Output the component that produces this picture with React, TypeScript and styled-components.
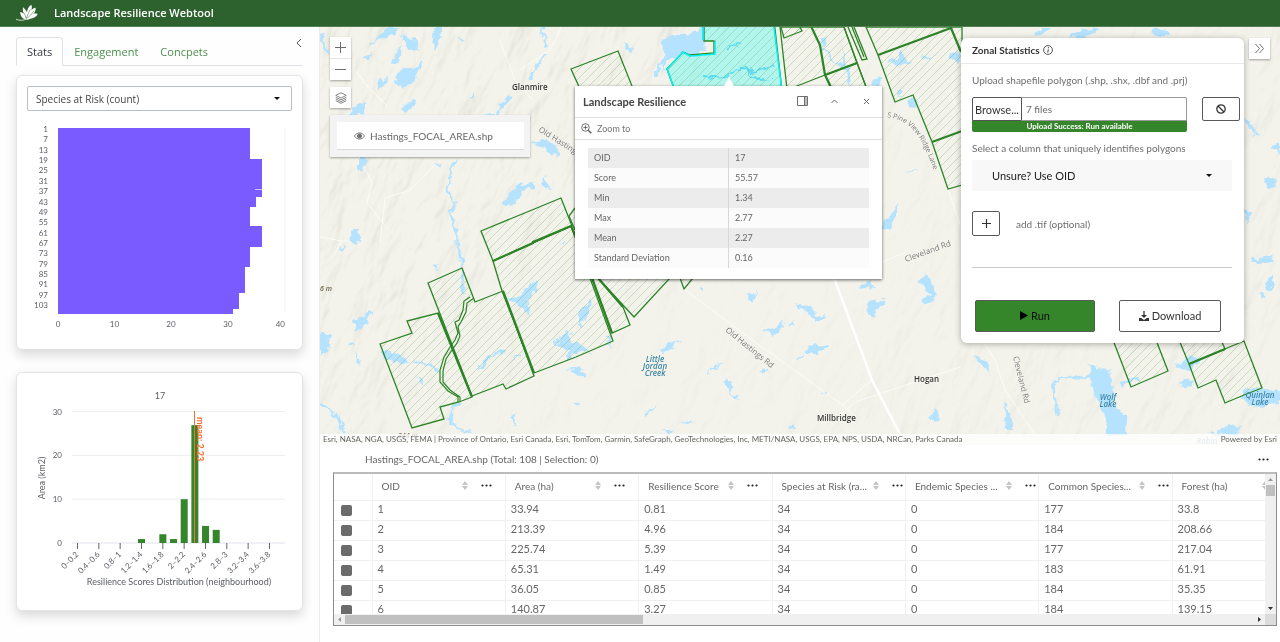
import React from "react";
import styled, { createGlobalStyle } from "styled-components";

const ui = `Lato, "Liberation Sans", sans-serif`;
const sans = `"Open Sans", "Noto Sans", sans-serif`;

const Global = createGlobalStyle`
  *, *::before, *::after { box-sizing: border-box; }
  html, body { margin: 0; padding: 0; }
  body { font-family: ${ui}; font-size: 10px; color: #666; background: #fff; }
  button, input, select { font: inherit; color: inherit; margin: 0; }
  button { cursor: pointer; }
`;

const Page = styled.div`
  min-height: 100vh;
  display: flex;
  flex-direction: column;
`;

const Header = styled.header`
  height: 27px;
  flex: none;
  display: flex;
  align-items: center;
  gap: 14px;
  padding: 0 16px;
  background: #2d622f;
  border-bottom: 1px solid #537f55;
`;

const Title = styled.h1`
  margin: 0;
  font: 600 11px/16px ${sans};
  color: #fff;
`;

const Body = styled.div`
  flex: 1;
  display: grid;
  grid-template-columns: 320px minmax(0, 1fr);
`;

const Sidebar = styled.aside`
  padding: 10px 16px 16px;
  background: #fefefe;
  border-right: 1px solid #ececec;
`;

const TabRow = styled.nav`
  display: flex;
  align-items: flex-end;
  height: 29px;
  border-bottom: 1px solid #dee2e6;
`;

const Tab = styled.button<{ $active?: boolean }>`
  height: 29px;
  margin-bottom: -1px;
  padding: 0 10px;
  font: 400 11px/16px ${sans};
  border: 1px solid;
  border-color: ${(p) => (p.$active ? "#dee2e6 #dee2e6 #fff" : "transparent")};
  border-radius: 4px 4px 0 0;
  background: ${(p) => (p.$active ? "#fff" : "none")};
  color: ${(p) => (p.$active ? "#343a40" : "#4d8f4f")};
`;

const Collapse = styled.button`
  width: 11px;
  height: 12px;
  margin: 0 -1px 16px auto;
  padding: 0;
  border: 0;
  background: none;
  svg { display: block; }
`;

const Card = styled.section`
  margin-top: ${(p: { $gap: number }) => p.$gap}px;
  border: 1px solid #e4e4e4;
  border-radius: 6px;
  background: #fff;
  box-shadow: 0 5px 12px rgba(0, 0, 0, 0.15);
  svg { display: block; width: 100%; height: auto; }
`;

const SelectWrap = styled.div<{ $filled?: boolean }>`
  display: grid;
  align-items: center;
  margin-top: ${(p) => (p.$filled ? 4 : 0)}px;
  > * { grid-area: 1 / 1; }
  > svg {
    width: 8px;
    height: 5px;
    justify-self: end;
    margin-right: ${(p) => (p.$filled ? 19 : 11)}px;
    pointer-events: none;
  }
`;

const MetricSelect = styled.select`
  appearance: none;
  width: 100%;
  height: 25px;
  padding: 0 8px;
  border: 1px solid #b9bfc6;
  border-radius: 2px;
  background: #fff;
  font: 400 10px/16px ${sans};
  color: #444;
`;

const ColumnSelect = styled.select`
  appearance: none;
  width: 100%;
  height: 31px;
  padding: 0 20px;
  border: 0;
  background: #f8f8f8;
  font-size: 11px;
  color: #222;
`;

const CardTop = styled.div`
  padding: 10px 10px 0;
`;

const Main = styled.main`
  display: flex;
  flex-direction: column;
`;

const MapPane = styled.section`
  position: relative;
  flex: 1;
  min-height: 418px;
  overflow: hidden;
  background: #f2f2eb;
`;

const MapArt = styled.svg`
  position: absolute;
  inset: 0;
  width: 100%;
  height: 100%;
`;

const Attribution = styled.footer`
  position: absolute;
  left: 0;
  right: 0;
  bottom: 0;
  display: flex;
  justify-content: space-between;
  padding: 0 3px;
  background: rgba(255, 255, 255, 0.75);
  font-size: 8px;
  line-height: 11px;
  white-space: nowrap;
`;

const LeftTools = styled.div`
  position: absolute;
  left: 10px;
  top: 10px;
  display: flex;
  flex-direction: column;
  gap: 7px;
  width: 200px;
`;

const ToolStack = styled.div`
  display: flex;
  flex-direction: column;
  gap: 1px;
  width: 21px;
  background: #e4e4e4;
  box-shadow: 0 1px 2px rgba(0, 0, 0, 0.35);
`;

const ToolButton = styled.button`
  display: grid;
  place-items: center;
  width: 21px;
  height: 21px;
  padding: 0;
  border: 0;
  background: #fff;
  color: #6e6e6e;
`;

const LayerList = styled.div`
  padding: 7px 6px 7px 7px;
  background: #f3f3f3;
  box-shadow: 0 1px 2px rgba(0, 0, 0, 0.35);
`;

const LayerItem = styled.div`
  display: flex;
  align-items: center;
  gap: 5px;
  height: 28px;
  padding-left: 17px;
  background: #fff;
  border-bottom: 1px solid #d8d8d8;
`;

const ExpandSlot = styled.div`
  position: absolute;
  top: 11px;
  right: 10px;
  box-shadow: 0 1px 2px rgba(0, 0, 0, 0.35);
`;

const Popup = styled.section`
  position: absolute;
  left: 255px;
  top: 59px;
  width: 307px;
  padding-bottom: 11px;
  background: #fff;
  box-shadow: 0 1px 3px rgba(0, 0, 0, 0.6);
  &::before {
    content: "";
    position: absolute;
    left: 149px;
    top: -9px;
    border: 5px solid transparent;
    border-top: 0;
    border-bottom: 9px solid #fff;
  }
`;

const PopupHead = styled.header`
  display: flex;
  align-items: center;
  height: 32px;
  padding: 0 10px 1px 8px;
  border-bottom: 1px solid #dfdfdf;
  h2 { margin: 0 auto 0 0; font-size: 11px; font-weight: 700; color: #444; }
`;

const IconButton = styled.button`
  display: grid;
  place-items: center;
  width: 32px;
  height: 24px;
  padding: 0;
  border: 0;
  background: none;
  color: #6e6e6e;
  &:last-child { width: 12px; margin-left: 10px; }
`;

const PopupAction = styled.button`
  display: flex;
  align-items: center;
  gap: 5px;
  width: 100%;
  height: 22px;
  padding: 0 6px;
  border: 0;
  border-bottom: 1px solid #dfdfdf;
  background: none;
  font-size: 9px;
  color: #777;
`;

const Fields = styled.table`
  width: calc(100% - 26px);
  margin: 8px 13px 0;
  border-collapse: collapse;
  font-size: 9px;
  line-height: 20px;
  tr { background: #fbfbfb; }
  tr:nth-child(odd) { background: #ececec; }
  th, td { padding: 0 6px; font-weight: 400; text-align: left; }
  th { width: 50%; border-right: 1px solid #d8d8d8; }
`;

const Panel = styled.section`
  position: absolute;
  top: 11px;
  right: 36px;
  width: 283px;
  background: #fff;
  border-radius: 6px;
  box-shadow: 0 1px 6px rgba(0, 0, 0, 0.3);
`;

const PanelHead = styled.header`
  display: flex;
  align-items: center;
  gap: 3px;
  height: 26px;
  padding: 0 11px 2px;
  border-bottom: 1px solid #e8e8e8;
  h2 { margin: 0; font-size: 10px; font-weight: 700; color: #333; }
`;

const PanelBody = styled.div`
  display: flex;
  flex-direction: column;
  padding: 8px 12px 11px 11px;
`;

const FieldLabel = styled.label`
  line-height: 16px;
  color: #6f6f6f;
`;

const UploadRow = styled.div`
  display: flex;
  align-items: flex-start;
  justify-content: space-between;
  margin: 9px -8px 8px 0;
`;

const Upload = styled.div`
  width: 215px;
`;

const FileBox = styled.div`
  display: flex;
  height: 24px;
`;

const Browse = styled.button`
  width: 50px;
  padding: 0;
  border: 1px solid #555;
  border-radius: 2px 0 0 0;
  background: #fff;
  font-size: 11px;
  color: #333;
`;

const FileName = styled.input`
  flex: 1;
  min-width: 0;
  padding: 0 4px;
  border: 1px solid #999;
  border-left: 0;
  border-radius: 0 2px 0 0;
  font-size: 10px;
  color: #6a6a6a;
`;

const Status = styled.output`
  display: block;
  height: 11px;
  border-radius: 0 0 2px 2px;
  background: #35852b;
  color: #fff;
  font-size: 8px;
  font-weight: 700;
  line-height: 11px;
  text-align: center;
`;

const Outlined = styled.button<{ $w: number; $h: number; $run?: boolean }>`
  display: flex;
  align-items: center;
  justify-content: center;
  gap: 3px;
  width: ${(p) => p.$w}px;
  height: ${(p) => p.$h}px;
  padding: 0 0 1px;
  border: 1px solid #5a5a5a;
  border-radius: 2px;
  background: ${(p) => (p.$run ? "#35852b" : "#fff")};
  font-size: 11px;
  color: ${(p) => (p.$run ? "#111" : "#333")};
`;

const AddRow = styled.div`
  display: flex;
  align-items: center;
  gap: 16px;
  margin-top: 20px;
  padding-bottom: 31px;
  border-bottom: 1px solid #ccc;
`;

const Actions = styled.div`
  display: flex;
  justify-content: space-between;
  padding: 32px 11px 0 3px;
`;

const TableSection = styled.section`
  padding: 0 3px 16px 13px;
`;

const TableTitle = styled.div`
  display: flex;
  align-items: center;
  justify-content: space-between;
  height: 27px;
  padding: 0 8px 0 32px;
`;

const DotsButton = styled.button`
  padding: 0;
  border: 0;
  background: none;
  line-height: 0;
`;

const TableFrame = styled.div`
  display: grid;
  grid-template-columns: minmax(0, 1fr) 11px;
  grid-template-rows: 140px 11px;
  border: 1px solid #8c8c8c;
  border-top: 2px solid #bbb;
`;

const TableView = styled.div`
  overflow: hidden;
`;

const Grid = styled.table`
  width: 972px;
  table-layout: fixed;
  border-collapse: collapse;
  th, td {
    height: 20px;
    padding: 0 0 2px 5px;
    border-right: 1px solid #f0f0f0;
    border-bottom: 1px solid #f0f0f0;
    font-size: 11px;
    font-weight: 400;
    line-height: 16px;
    text-align: left;
    white-space: nowrap;
  }
  th { height: 26px; padding: 0 0 2px 9px; font-size: 10px; }
  th:first-child { width: 38px; }
`;

const HeadCell = styled.div<{ $wide: boolean }>`
  display: grid;
  grid-template-columns: ${(p) => (p.$wide ? 91 : 80)}px 19px 11px;
  align-items: center;
  svg { display: block; }
`;

const Tick = styled.input`
  appearance: none;
  display: block;
  width: 11px;
  height: 11px;
  margin: 2px 0 0 2px;
  border-radius: 2px;
  background: #6b6b6b;
`;

const Track = styled.div<{ $row?: boolean }>`
  display: flex;
  flex-direction: ${(p) => (p.$row ? "row" : "column")};
  align-items: center;
  background: #f0f0f0;
  svg { flex: none; margin: ${(p) => (p.$row ? "0 2px" : "2px 0")}; }
`;

const Thumb = styled.div<{ $row?: boolean }>`
  ${(p) => (p.$row ? "width: 32%; height: 9px;" : "width: 9px; height: 11px;")}
  margin-bottom: ${(p) => (p.$row ? 0 : "auto")};
  margin-right: ${(p) => (p.$row ? "auto" : 0)};
  background: #c0c0c0;
`;

const Corner = styled.div`
  background: #dcdcdc;
`;

const Caret = () => (
  <svg viewBox="0 0 8 5"><path d="M1 1h6L4 4z" fill="#111" /></svg>
);

const Arrow = ({ dir }: { dir: "up" | "down" | "left" | "right" }) => {
  const turn = { up: 0, right: 90, down: 180, left: 270 }[dir];
  return (
    <svg width="7" height="7" viewBox="0 0 7 7">
      <path d="M1 5l2.500-3L6 5z" fill={dir === "up" || dir === "left" ? "#999" : "#333"} transform={`rotate(${turn} 3.500 3.500)`} />
    </svg>
  );
};

const Dots = () => (
  <svg width="11" height="3" viewBox="0 0 11 3" fill="#222">
    <circle cx="1.500" cy="1.500" r="1.100" /><circle cx="5.500" cy="1.500" r="1.100" /><circle cx="9.500" cy="1.500" r="1.100" />
  </svg>
);

const Sort = () => (
  <svg width="6" height="9" viewBox="0 0 6 9" fill="#c4c4c4"><path d="M0 4l3-4 3 4zM0 5l3 4 3-4z" /></svg>
);

const Leaf = () => (
  <svg width="24" height="18" viewBox="0 0 72 54" fill="#fff">
    <path d="M28 46C17 43 12 33 13 24c5 1 8 3 10 6-2-8-3-14-2-20 5 3 9 9 12 15 1-9 4-17 13-23 2 6 2 11 0 17 4-5 8-7 13-8 0 8-2 14-7 19 5-2 9-2 13 0-4 9-12 13-23 14-5 4-9 4-14 2z" />
    <path d="M0 46c11 4 22 4 31-1" stroke="#fff" strokeWidth="2.200" fill="none" />
    <path d="M31 44c9-6 17-14 23-24M30 43c-1-7-4-13-7-18M31 43c3-9 7-19 12-27" stroke="#2d622f" strokeWidth="1.500" fill="none" />
  </svg>
);

const RISK_BARS: [number, number, number][] = [
  [0, 18, 34], [18, 40, 36], [40, 46, 35], [46, 57, 34], [57, 69, 36], [69, 81, 34], [81, 96, 33], [96, 105, 32], [105, 108, 31],
];

const ChartText = styled.text<{ $title?: boolean }>`
  font-family: ${ui};
  font-size: ${(p) => (p.$title ? 9 : 8)}px;
  fill: #5e6068;
`;

/* Drawn in a 285 wide space that fills the card. */
const RiskChart = () => (
  <svg viewBox="0 0 285 238" role="img" aria-label="Species at risk by polygon">
    <path d="M268 17v185" stroke="#f1f1f1" />
    <g fill="#7a5bff" shapeRendering="crispEdges">
      {RISK_BARS.map(([a, b, v]) => (
        <rect key={a} x="41" y={17 + a * 1.722} width={v * 5.66} height={(b - a) * 1.722} />
      ))}
    </g>
    <path d="M238 78.500h7" stroke="#cfc4ff" />
    {Array.from({ length: 18 }, (_, i) => (
      <ChartText key={i} x="31" y={21 + i * 10.36} textAnchor="end">{1 + i * 6}</ChartText>
    ))}
    {[41, 97.500, 154, 211].map((x, i) => (
      <ChartText key={x} x={x} y="216" textAnchor="middle">{i * 10}</ChartText>
    ))}
    <ChartText x="268" y="216" textAnchor="end">40</ChartText>
  </svg>
);

const BINS = ["0–0.2", "0.4–0.6", "0.8–1", "1.2–1.4", "1.6–1.8", "2–2.2", "2.4–2.6", "2.8–3", "3.2–3.4", "3.6–3.8"];
const DIST: [number, number][] = [[6, 0.9], [8, 2], [9, 0.9], [10, 10], [11, 26.9], [12, 3.9], [13, 3]];

const ScoreChart = () => (
  <svg viewBox="0 0 285 237" role="img" aria-label="Resilience score distribution">
    <ChartText x="143" y="26" textAnchor="middle" $title>17</ChartText>
    {[0, 10, 20, 30].map((v) => (
      <g key={v}>
        <path d={`M55 ${170 - v * 4.38}h213`} stroke={v ? "#eceef2" : "#dfe3ee"} />
        <ChartText x="45" y={173 - v * 4.38} textAnchor="end">{v}</ChartText>
      </g>
    ))}
    {DIST.map(([i, v]) => (
      <rect key={i} x={57 + i * 10.67} y={170 - v * 4.38} width="7" height={v * 4.38} fill="#35852b" />
    ))}
    {BINS.map((b, i) => (
      <g key={b}>
        <path d={`M${60.500 + i * 21.33} 170v6`} stroke="#666" />
        <ChartText x="0" y="0" textAnchor="end" transform={`translate(${62 + i * 21.33} 182) rotate(-45)`}>{b}</ChartText>
      </g>
    ))}
    <path d="M177.500 38v132" stroke="#e8743c" />
    <ChartText transform="translate(180 44) rotate(90)" $title style={{ fill: "#ff6a2b", fontWeight: 700 }}>mean: 2.23</ChartText>
    <ChartText textAnchor="middle" transform="translate(28 105) rotate(-90)" $title>Area (km2)</ChartText>
    <ChartText x="162" y="212" textAnchor="middle" $title>Resilience Scores Distribution (neighbourhood)</ChartText>
  </svg>
);

const LAKES = [
  "370,46 378,36 388,28 400,28 388,38 376,40 373,47", "402,37 408,35 419,44 418,52 408,50", "362,58 372,52 368,61",
  "391,64 396,50 402,45 399,63", "396,80 402,68 412,68 424,58 416,78 404,88 397,85", "377,80 386,78 384,88 379,90",
  "434,28 442,28 436,51 432,48", "455,36 463,38 462,42", "402,110 412,98 417,100 412,108 406,113", "349,115 356,104 366,104 364,115",
  "469,98 474,93 474,99", "531,142 545,139 559,148 557,157 548,152", "359,156 366,158 363,171 359,171", "434,163 441,162 438,166",
  "503,204 512,192 516,186 526,184 535,183 534,190 526,188 518,196 512,206", "542,186 544,176 547,184 552,189", "623,42 634,50 632,53 626,49",
  "351,231 359,229 360,242 352,243", "340,250 345,246 344,253", "432,266 438,264 437,271", "352,322 366,314 373,310 367,323 357,331",
  "320,334 331,334 328,350 320,357", "348,347 350,342 353,346", "355,360 357,353 360,366", "378,352 395,352 409,361 402,364 385,358",
  "417,376 424,379 424,386", "508,297 520,295 530,285 537,280 538,290 527,300 530,317 520,307 510,302", "477,370 483,360 502,348 506,353 492,357 484,368",
  "484,374 500,376 490,375", "511,360 521,352 522,356", "553,340 558,342 563,334 570,330 572,344 580,341 590,352 580,352 566,360 569,350 558,346",
  "576,318 582,308 592,300 588,315 580,328 580,318", "567,370 578,368 586,373 584,377 574,372", "559,243 566,242 563,245", "605,338 608,334 612,350",
  "572,404 578,400 577,405", "511,416 516,413 514,426", "660,350 665,344 680,340 675,345 668,352 665,354", "708,373 715,365 724,362 715,369",
  "724,380 729,379 731,392 739,399 733,398", "745,295 757,292 751,302", "699,288 704,286 704,291", "794,303 808,306 816,315 825,315 818,322 810,315",
  "759,331 775,328 784,321 782,331 774,336", "787,324 795,321 794,325", "804,352 815,344 829,345 820,352", "796,359 804,355 803,358", "759,372 763,368 767,373",
  "821,392 826,392 825,396", "856,289 868,281 876,287", "865,309 872,300 887,300 880,306 873,319 867,312", "920,281 928,272 931,282 936,290 934,300 925,304 922,300 930,296",
  "643,417 650,408 658,404 651,411", "680,420 688,423 697,421 688,426", "661,430 674,430 668,437", "786,429 792,424 798,428", "930,417 934,408 940,419 934,423",
  "904,173 912,169 919,169", "882,232 884,221 891,214 896,204 896,217 890,229", "907,100 913,96 918,101 916,108 909,107", "896,92 902,89 900,96", "871,84 880,76 885,78 876,89",
  "889,61 898,58 903,48 905,60 912,62 900,66", "920,56 930,58 936,54 929,61", "948,57 955,52 961,55 958,63", "842,46 846,62 852,80 849,86 844,70", "818,40 827,36 826,46",
  "1090,370 1100,367 1110,370 1112,380 1115,405 1127,420 1126,435 1108,435 1103,410 1095,395 1090,380", "1087,363 1096,368 1092,372", "974,354 985,360 992,375 985,368",
  "1004,396 1007,409 1012,415 1012,430 1006,430", "1241,395 1250,387 1266,388 1280,392 1279,402 1262,408 1247,405", "1174,367 1190,355 1202,360 1188,370",
  "1179,385 1188,378 1194,380 1190,387", "1243,208 1252,215 1246,224", "1248,263 1260,257 1273,254 1272,261 1262,263", "1264,284 1273,272 1273,290 1266,287", "1259,294 1265,293 1262,299",
  "1244,116 1250,122 1259,136 1251,133", "1270,147 1280,142 1280,152", "1264,178 1275,178 1277,188 1268,188", "1033,35 1042,28 1052,28 1040,36", "1068,36 1090,28 1100,30 1082,37",
  "1150,30 1158,27 1171,36 1156,36", "1210,435 1228,426 1242,427 1236,436", "1108,432 1122,423 1128,435",
];

const STREAMS = [
  "M320 33l4 12 4 9", "M541 20l2 14 5 13", "M546 54l-9 10-7 14", "M512 96l-9 7-6 12-16 1", "M456 159l-6 16-3 15 8 13-5 10 5 12 3 20 4 17 1 33",
  "M459 402l-7 8-2 10 10 10 12 2", "M320 404l10 6 10 10 4 14", "M415 362l8 0 15 10", "M1058 417l-3-17-2-18 12-6 20 2 7-3", "M668 56c-8 6-10 12-12 20", "M820 44l14 18 12 4", "M1121 388l5-8 14-2",
];

const PARCELS = [
  "M481 231l80-33 11 28-39 17-40 18z", "M493 261l40-18 38-17 42 115-37 16-42 16-32-82z", "M592 278l20 55 18-8-7-18-25-29", "M598 278l36 39 36-39z", "M680 278l4 11 9-11",
  "M428 283l34-15 10 26 3 8 28-11 31 85-28 13-3-5-31 12z", "M380 344l32-11-5-12 31-8 34 84-13 5-19 5 4 12-32 9z", "M571 69l47-18 16 40h-53z", "M575 208l-6 8 6 14",
  "M780 27l7 62 10-3 28-11 32-12-13-36z", "M781 27l3 11 18-7-2-4", "M825 75l32-12 10 26h-36z", "M844 27l22 60M848 27l14 33 5-1-13-32M852 27l12 30",
  "M866 27l12 28 17 47 18-7 19 47 16 47 14-4V27z", "M1113 340l18 47 37-16-12-31z", "M1179 340l10 24 36-15-4-9z", "M1189 364l55-23 18 47-18 7-19 8-9-23-18 8z",
];

const HEAVY = "M438 313l34 84M493 261l40-18v-1l38-16M503 291l31 82M571 226l4 9M592 278l20 55M598 278l25 29M808 20l12 25 5 30 6 12M825 75l32-12M878 55l73-27 10 24M932 142l30-11M1189 364l36-15";
const CREEK = "M470 297l-6 4-1 9-4 10-4 2 3 11-3 7-5 7-6 10-4 13v12l8 9 10 6v5M474 298l-7 5-1 9-5 10-3 5 2 9-3 7-5 7-6 9-3 12v11l7 8 10 7v4";

const ROADS = "M357 72l10 14 20 20M520 70l30-20 15-30M500 40l15 40 18 20M357 153l15 30-5 20 20 25M440 160l-30 30-25 8-5 45M320 237l22 4 20 0M342 241l-10 18M684 289l60 45 100 72 12 10M835 420l20-18 45-15 60-20M960 240l40-20M872 380l-30 25M950 90l30 80M975 330l20 30 10 30 30 45M1035 200l60 40M940 165l20 60M882 262l24-10";

const Place = styled.text`
  font: 600 8px ${sans};
  fill: #333;
  paint-order: stroke;
  stroke: #f6f6f0;
  stroke-width: 1px;
`;
const Road = styled.text`
  font: 400 8px ${sans};
  fill: #777;
  paint-order: stroke;
  stroke: #f6f6f0;
  stroke-width: 1px;
`;
const PineRoad = styled(Road)`
  font-size: 7px;
`;
const Peak = styled.text`
  font: italic 600 7px ${sans};
  fill: #6b6347;
`;
const Water = styled.text`
  font: italic 600 8px ${sans};
  fill: #3b87a5;
  text-anchor: middle;
`;

const Basemap = () => (
  <MapArt viewBox="320 27 960 418" preserveAspectRatio="xMinYMin slice" role="img" aria-label="Map of Hastings focal area">
    <defs>
      <filter id="relief" x="0" y="0" width="100%" height="100%">
        <feTurbulence type="fractalNoise" baseFrequency="0.030 0.014" numOctaves="4" seed="8" />
        <feDiffuseLighting surfaceScale="8" diffuseConstant="1.15" lightingColor="#fffef6">
          <feDistantLight azimuth="200" elevation="60" />
        </feDiffuseLighting>
      </filter>
      <filter id="shore" x="-2%" y="-2%" width="104%" height="104%">
        <feTurbulence type="fractalNoise" baseFrequency="0.14" numOctaves="2" seed="3" />
        <feDisplacementMap in="SourceGraphic" scale="9" xChannelSelector="R" yChannelSelector="G" />
      </filter>
      <linearGradient id="fade" x1="0" x2="1" y1="0" y2="0.400">
        <stop offset="0" stopColor="#fff" /><stop offset="0.300" stopColor="#fff" />
        <stop offset="0.450" stopColor="#555" /><stop offset="0.700" stopColor="#555" /><stop offset="1" stopColor="#999" />
      </linearGradient>
      <mask id="fadeMask"><rect x="320" y="27" width="960" height="418" fill="url(#fade)" /></mask>
      <pattern id="hatch" width="9" height="9" patternUnits="userSpaceOnUse">
        <path d="M-1 10L10 -1M-1 1L1 -1M8 10L10 8" stroke="#3f9a36" strokeOpacity="0.420" strokeWidth="0.600" />
      </pattern>
      <path id="pine" d="M887 117c24 4 36 16 52 70" />
    </defs>
    <rect x="320" y="27" width="960" height="418" fill="#f3f3ec" />
    <g mask="url(#fadeMask)" opacity="0.200" style={{ mixBlendMode: "multiply" }}>
      <rect x="100" y="-400" width="1400" height="1400" filter="url(#relief)" transform="rotate(22 800 236)" />
    </g>
    <path d={ROADS} fill="none" stroke="#fff" strokeOpacity="0.700" />
    <path d="M833 275l39 105 34 66" fill="none" stroke="#fff" strokeWidth="2.500" />
    <g filter="url(#shore)" fill="#b5e3ff">
      <polygon points="660,42 672,35 690,33 704,26 706,52 690,56 682,53 668,62 661,74 665,56" />
      {LAKES.map((p) => <polygon key={p} points={p} />)}
      {STREAMS.map((d) => <path key={d} d={d} fill="none" stroke="#b5e3ff" strokeWidth="2.500" />)}
    </g>
    <path d="M704 20v21h10v12l-24 2-7-3-16 17 8 22h107l-8-71z" fill="#6ff8ee" fillOpacity="0.500" />
    <path d="M704 76l20 2 14-10 18 4 20-8M726 50l14-8M745 66l8 12 18 2" fill="none" stroke="#5cdcf3" strokeWidth="2" filter="url(#shore)" />
    <g fill="url(#hatch)" stroke="#2c8427" strokeWidth="1.300">
      {PARCELS.map((d) => <path key={d} d={d} />)}
      <path d="M704 20v21h10v12l-24 2-7-3-16 17 8 22h107l-8-71z" />
    </g>
    <path d={HEAVY} fill="none" stroke="#2c8427" strokeWidth="2.200" />
    <path d={CREEK} fill="none" stroke="#2c8427" strokeWidth="1.200" />
    <path d="M703 20v20M715 41v13l-25 2-7-4-16 17 8 22M773 20l9 71" fill="none" stroke="#00f2f2" strokeWidth="1.600" />
    <Place x="512" y="90">Glanmire</Place>
    <Place x="914" y="382">Hogan</Place>
    <Place x="817" y="421">Millbridge</Place>
    <Road transform="translate(538 131) rotate(32)">Old Hastings Rd</Road>
    <Road transform="translate(725 331) rotate(39)">Old Hastings Rd</Road>
    <Road transform="translate(906 262) rotate(-20)">Cleveland Rd</Road>
    <Road transform="translate(1013 357) rotate(76)">Cleveland Rd</Road>
    <PineRoad><textPath href="#pine">S Pine View Ridge Lane</textPath></PineRoad>
    <Water x="655" y="362">Little</Water><Water x="655" y="369">Jordan</Water><Water x="655" y="376">Creek</Water>
    <Water x="1108" y="400">Wolf</Water><Water x="1108" y="407">Lake</Water>
    <Water x="1260" y="398">Quinlan</Water><Water x="1260" y="405">Lake</Water>
    <Water x="1207" y="444" opacity="0.500">Robin</Water>
    <Peak x="320" y="291">6 m</Peak>
    <Peak x="398" y="438">344 m</Peak>
  </MapArt>
);

const FIELDS = [["OID", "17"], ["Score", "55.57"], ["Min", "1.34"], ["Max", "2.77"], ["Mean", "2.27"], ["Standard Deviation", "0.16"]];

const COLUMNS = ["OID", "Area (ha)", "Resilience Score", "Species at Risk (ra...", "Endemic Species ...", "Common Species...", "Forest (ha)"];
const ROWS = [
  ["1", "33.94", "0.81", "34", "0", "177", "33.8"],
  ["2", "213.39", "4.96", "34", "0", "184", "208.66"],
  ["3", "225.74", "5.39", "34", "0", "177", "217.04"],
  ["4", "65.31", "1.49", "34", "0", "183", "61.91"],
  ["5", "36.05", "0.85", "34", "0", "184", "35.35"],
  ["6", "140.87", "3.27", "34", "0", "184", "139.15"],
];

export default function App() {
  return (
    <Page>
      <Global />
      <Header><Leaf /><Title>Landscape Resilience Webtool</Title></Header>
      <Body>
        <Sidebar>
          <TabRow>
            <Tab $active>Stats</Tab><Tab>Engagement</Tab><Tab>Concpets</Tab>
            <Collapse aria-label="Collapse panel">
              <svg width="11" height="12" viewBox="0 0 11 12"><path d="M8 2L4 6l4 4" fill="none" stroke="#555" /></svg>
            </Collapse>
          </TabRow>
          <Card $gap={9}>
            <CardTop>
              <SelectWrap>
                <MetricSelect aria-label="Metric"><option>Species at Risk (count)</option></MetricSelect>
                <Caret />
              </SelectWrap>
            </CardTop>
            <RiskChart />
          </Card>
          <Card $gap={22}><ScoreChart /></Card>
        </Sidebar>
        <Main>
          <MapPane>
            <Basemap />
            <LeftTools>
              <ToolStack>
                <ToolButton aria-label="Zoom in"><svg width="11" height="11"><path d="M5.500 0v11M0 5.500h11" stroke="#6e6e6e" /></svg></ToolButton>
                <ToolButton aria-label="Zoom out"><svg width="11" height="11"><path d="M0 5.500h11" stroke="#6e6e6e" /></svg></ToolButton>
              </ToolStack>
              <ToolStack>
                <ToolButton aria-label="Layers">
                  <svg width="12" height="12" viewBox="0 0 16 16" fill="none" stroke="#6e6e6e" strokeWidth="1.100"><path d="M8 1l7 3.500L8 8 1 4.500zM1 7l7 3.500L15 7M1 9.300l7 3.500 7-3.500M1 11.600l7 3.500 7-3.500" /></svg>
                </ToolButton>
              </ToolStack>
              <LayerList>
                <LayerItem>
                  <svg width="11" height="8" viewBox="0 0 16 11" fill="none" stroke="#6e6e6e" strokeWidth="1.300"><path d="M.7 5.500C4-.4 12-.4 15.300 5.500 12 11.400 4 11.400.7 5.500z" /><circle cx="8" cy="5.500" r="3" fill="#6e6e6e" /></svg>
                  Hastings_FOCAL_AREA.shp
                </LayerItem>
              </LayerList>
            </LeftTools>
            <Popup>
              <PopupHead>
                <h2>Landscape Resilience</h2>
                <IconButton aria-label="Dock"><svg width="11" height="10" viewBox="0 0 11 10" fill="none" stroke="#6e6e6e"><path d="M.5.500h10v9H.5zM7.500.500v9" /><path d="M8 1h2v8H8z" fill="#bbb" stroke="none" /></svg></IconButton>
                <IconButton aria-label="Collapse"><svg width="7" height="5" viewBox="0 0 7 5" fill="none" stroke="#6e6e6e"><path d="M.5 4l3-3 3 3" /></svg></IconButton>
                <IconButton aria-label="Close"><svg width="7" height="7" viewBox="0 0 7 7" stroke="#6e6e6e"><path d="M1 1l5 5M6 1l-5 5" /></svg></IconButton>
              </PopupHead>
              <PopupAction>
                <svg width="11" height="11" viewBox="0 0 16 16" fill="none" stroke="#5e5e5e" strokeWidth="1.300"><circle cx="6.500" cy="6.500" r="5.500" /><path d="M3.500 6.500h6M6.500 3.500v6" /><path d="M10.500 10.500l4.500 4.500" strokeWidth="2.200" /></svg>
                Zoom to
              </PopupAction>
              <Fields><tbody>
                {FIELDS.map(([k, v]) => <tr key={k}><th scope="row">{k}</th><td>{v}</td></tr>)}
              </tbody></Fields>
            </Popup>
            <Panel>
              <PanelHead>
                <h2>Zonal Statistics</h2>
                <svg width="10" height="10" viewBox="0 0 10 10" fill="none" stroke="#444"><circle cx="5" cy="5" r="4.400" strokeWidth="0.900" /><path d="M5.400 4.300L4.700 7.500M5.500 2.300v1" strokeWidth="1.100" /></svg>
              </PanelHead>
              <PanelBody>
                <FieldLabel htmlFor="files">Upload shapefile polygon (.shp, .shx, .dbf and .prj)</FieldLabel>
                <UploadRow>
                  <Upload>
                    <FileBox><Browse>Browse...</Browse><FileName id="files" readOnly value="7 files" /></FileBox>
                    <Status>Upload Success: Run available</Status>
                  </Upload>
                  <Outlined $w={38} $h={24} aria-label="Clear">
                    <svg width="10" height="10" viewBox="0 0 10 10" fill="none" stroke="#333" strokeWidth="1.300"><circle cx="5" cy="5" r="4.200" /><path d="M2 2l6 6" /></svg>
                  </Outlined>
                </UploadRow>
                <FieldLabel htmlFor="column">Select a column that uniquely identifies polygons</FieldLabel>
                <SelectWrap $filled>
                  <ColumnSelect id="column"><option>Unsure? Use OID</option></ColumnSelect>
                  <Caret />
                </SelectWrap>
                <AddRow>
                  <Outlined $w={28} $h={25} id="tif" aria-label="Add tif"><svg width="9" height="9"><path d="M4.500 0v9M0 4.500h9" stroke="#333" strokeWidth="1.200" /></svg></Outlined>
                  <FieldLabel htmlFor="tif">add .tif (optional)</FieldLabel>
                </AddRow>
                <Actions>
                  <Outlined $w={120} $h={32} $run><svg width="8" height="9"><path d="M0 0l8 4.500L0 9z" fill="#000" /></svg>Run</Outlined>
                  <Outlined $w={102} $h={32}>
                    <svg width="10" height="10" viewBox="0 0 20 20" fill="#333"><path d="M8.700 0h2.600v8H16l-6 6-6-6h4.700zM0 14h4.500l5.500 4 5.500-4H20v6H0z" /></svg>Download
                  </Outlined>
                </Actions>
              </PanelBody>
            </Panel>
            <ExpandSlot>
              <ToolButton aria-label="Collapse widgets"><svg width="9" height="11" fill="none" stroke="#6e6e6e"><path d="M.5 1l4 4.500-4 4.500M4.500 1l4 4.500-4 4.500" /></svg></ToolButton>
            </ExpandSlot>
            <Attribution>
              <span>Esri, NASA, NGA, USGS, FEMA | Province of Ontario, Esri Canada, Esri, TomTom, Garmin, SafeGraph, GeoTechnologies, Inc, METI/NASA, USGS, EPA, NPS, USDA, NRCan, Parks Canada</span>
              <span>Powered by Esri</span>
            </Attribution>
          </MapPane>
          <TableSection>
            <TableTitle>
              Hastings_FOCAL_AREA.shp (Total: 108 | Selection: 0)
              <DotsButton aria-label="Table menu"><Dots /></DotsButton>
            </TableTitle>
            <TableFrame>
              <TableView>
                <Grid>
                  <thead><tr>
                    <th />
                    {COLUMNS.map((c) => (
                      <th key={c}><HeadCell $wide={c.endsWith("...")}>{c}<Sort /><DotsButton aria-label={`${c} menu`}><Dots /></DotsButton></HeadCell></th>
                    ))}
                  </tr></thead>
                  <tbody>
                    {ROWS.map((r) => (
                      <tr key={r[0]}>
                        <td><Tick type="checkbox" aria-label={`Select row ${r[0]}`} /></td>
                        {r.map((v, i) => <td key={i}>{v}</td>)}
                      </tr>
                    ))}
                  </tbody>
                </Grid>
              </TableView>
              <Track><Arrow dir="up" /><Thumb /><Arrow dir="down" /></Track>
              <Track $row><Arrow dir="left" /><Thumb $row /><Arrow dir="right" /></Track>
              <Corner />
            </TableFrame>
          </TableSection>
        </Main>
      </Body>
    </Page>
  );
}
